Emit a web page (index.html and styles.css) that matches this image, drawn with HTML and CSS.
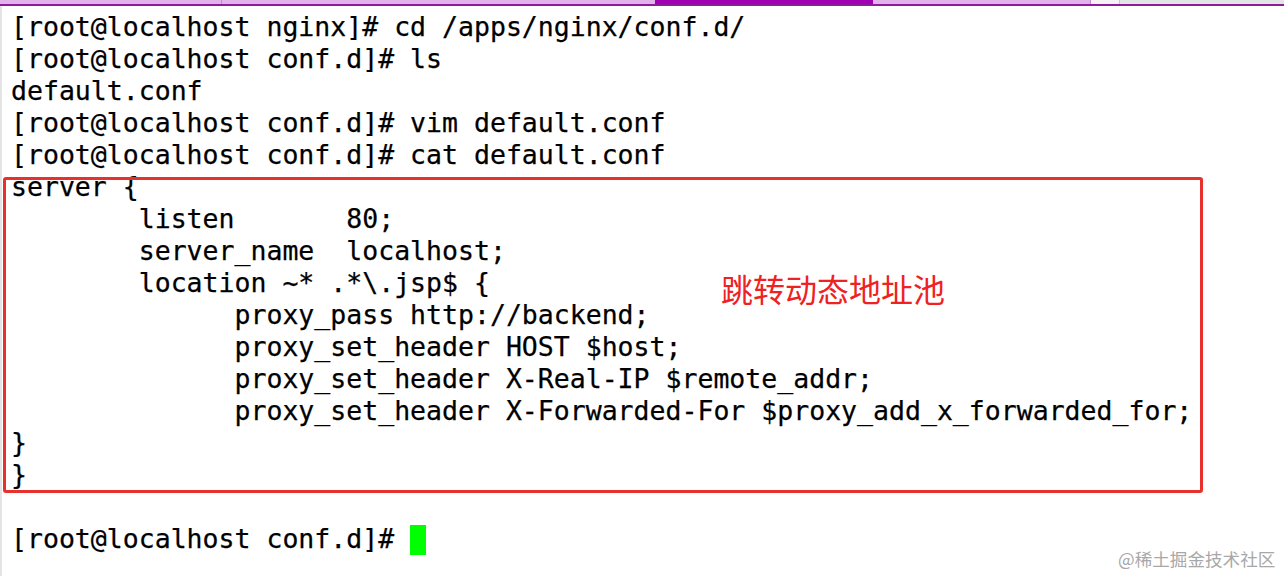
FILE: index.html
```html
<!DOCTYPE html>
<html>
<head>
<meta charset="utf-8">
<link rel="stylesheet" href="styles.css">
</head>
<body>
<div class="tabs">
  <div class="tab t1"></div>
  <div class="tab t2"></div>
  <div class="tab t3"></div>
  <div class="tab t4"></div>
  <div class="tab t5"></div>
  <div class="tab t6"></div>
</div>
<div class="term">
<pre class="out">[root@localhost nginx]# cd /apps/nginx/conf.d/
[root@localhost conf.d]# ls
default.conf
[root@localhost conf.d]# vim default.conf
[root@localhost conf.d]# cat default.conf
server {
        listen       80;
        server_name  localhost;
        location ~* .*\.jsp$ {
              proxy_pass http://backend;
              proxy_set_header HOST $host;
              proxy_set_header X-Real-IP $remote_addr;
              proxy_set_header X-Forwarded-For $proxy_add_x_forwarded_for;
}
}

[root@localhost conf.d]# <span class="cursor"></span></pre>
<div class="box"></div>
<div class="note">跳转动态地址池</div>
<div class="mark">@稀土掘金技术社区</div>
</div>
</body>
</html>
```
FILE: styles.css
```css
html, body {
  margin: 0;
  padding: 0;
  background: #ffffff;
}
body {
  width: 1284px;
  height: 576px;
  overflow: hidden;
}
.tabs {
  display: flex;
  height: 4px;
  border-bottom: 2px solid #8c1c9c;
}
.tab { height: 4px; }
.t1 { width: 221px; background: #e2b2ea; border-right: 1px solid #c48ccc; }
.t2 { width: 433px; background: #e2b2ea; }
.t3 { width: 218px; background: #a000b2; }
.t4 { width: 217px; background: #e2b2ea; border-right: 1px solid #c48ccc; }
.t5 { width: 28px; background: #f6f2f6; border-right: 1px solid #c8c8c8; }
.t6 { flex: 1; background: #e4e4e4; }
.term {
  position: relative;
  height: 570px;
  border-left: 2px solid #e4e4e4;
  box-sizing: border-box;
}
.out {
  margin: 0;
  padding: 5px 0 0 9px;
  font-family: "DejaVu Sans Mono", monospace;
  font-size: 26.53px;
  line-height: 32px;
  color: #000000;
  -webkit-text-stroke: 0.25px #000000;
}
.cursor {
  display: inline-block;
  width: 16px;
  height: 30px;
  background: #00ff00;
  vertical-align: -7px;
}
.box {
  position: absolute;
  left: 1px;
  top: 171px;
  width: 1194px;
  height: 310px;
  border: 3px solid #e8302c;
  border-radius: 3px;
}
.note {
  position: absolute;
  left: 719px;
  top: 262px;
  font-family: "Noto Sans CJK SC", sans-serif;
  font-size: 32px;
  line-height: 40px;
  color: #ee2222;
}
.mark {
  position: absolute;
  left: 1116px;
  top: 542px;
  font-family: "Noto Sans CJK SC", sans-serif;
  font-size: 17.6px;
  line-height: 22px;
  color: #a8a8a8;
}
```
